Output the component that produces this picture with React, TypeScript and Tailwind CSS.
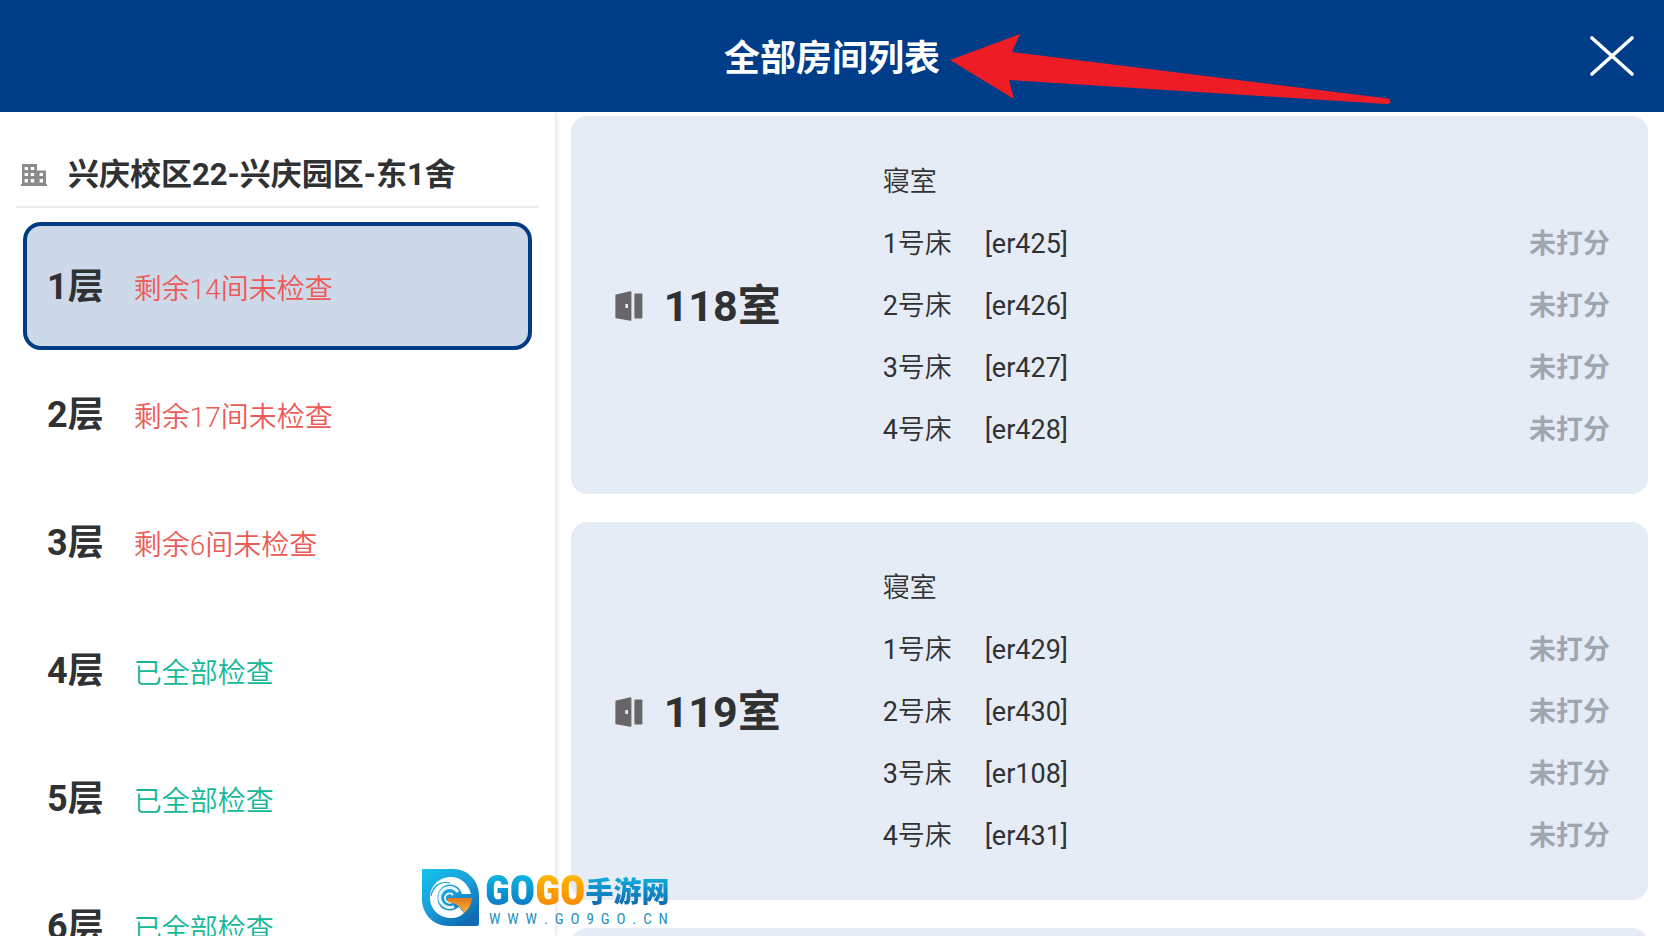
type Floor = { name: string; status: string; done: boolean };
type Bed = { name: string; code: string; score: string };
type Room = { name: string; kind: string; beds: Bed[] };

const floors: Floor[] = [
  { name: "1层", status: "剩余14间未检查", done: false },
  { name: "2层", status: "剩余17间未检查", done: false },
  { name: "3层", status: "剩余6间未检查", done: false },
  { name: "4层", status: "已全部检查", done: true },
  { name: "5层", status: "已全部检查", done: true },
  { name: "6层", status: "已全部检查", done: true },
];

const rooms: Room[] = [
  {
    name: "118室",
    kind: "寝室",
    beds: [
      { name: "1号床", code: "[er425]", score: "未打分" },
      { name: "2号床", code: "[er426]", score: "未打分" },
      { name: "3号床", code: "[er427]", score: "未打分" },
      { name: "4号床", code: "[er428]", score: "未打分" },
    ],
  },
  {
    name: "119室",
    kind: "寝室",
    beds: [
      { name: "1号床", code: "[er429]", score: "未打分" },
      { name: "2号床", code: "[er430]", score: "未打分" },
      { name: "3号床", code: "[er108]", score: "未打分" },
      { name: "4号床", code: "[er431]", score: "未打分" },
    ],
  },
];

function BuildingIcon() {
  return (
    <svg viewBox="0 0 26 22" className="h-[22px] w-[26px] shrink-0" aria-hidden="true">
      <path
        fill="#8b8b8b"
        fillRule="evenodd"
        d="M1 0H16V6.5H25V20H26V22H0V20H1ZM3.6 3v3h3.4V3ZM9.8 3v3h3.4V3ZM3.6 9v3h3.4V9ZM9.8 9v3h3.4V9ZM3.6 15v3.4h3.4V15ZM9.8 15v3.4h3.4V15ZM18.6 9v3h3.4V9ZM18.6 15v3.4h3.4V15Z"
      />
    </svg>
  );
}

function DoorIcon() {
  return (
    <svg viewBox="0 0 28 30" className="h-[30px] w-[28px] shrink-0" aria-hidden="true">
      <path
        fill="#666666"
        fillRule="evenodd"
        d="M1.2 3.6 15.2 0.2Q16.4 0 16.4 1V29Q16.4 30 15.2 29.8L1.2 27.2Q0.4 27 0.4 26.2V4.6Q0.4 3.8 1.2 3.6ZM10.4 13v4h2.6v-4Z"
      />
      <rect x="19.4" y="2.6" width="8" height="24.8" rx="1" fill="#666666" />
    </svg>
  );
}

function Arrow() {
  return (
    <svg
      viewBox="0 0 442 72"
      className="pointer-events-none absolute top-8 left-1/2 ml-[118px] h-[72px] w-[442px]"
      aria-hidden="true"
    >
      <path
        fill="#ee1c25"
        d="M0 28 70 2 62 20 438 66.6Q441 67.4 440.4 70 439.6 72.4 436 72L59 48 64 67Z"
      />
    </svg>
  );
}

function SiteMark() {
  return (
    <div className="pointer-events-none absolute bottom-[10px] left-[422px] flex items-center gap-[6px]">
      <svg viewBox="0 0 57 57" className="size-[57px]" aria-hidden="true">
        <defs>
          <linearGradient id="mark-body" x1="0" y1="0" x2="0.7" y2="1">
            <stop offset="0" stopColor="#14c4ea" />
            <stop offset="0.55" stopColor="#1b9cd8" />
            <stop offset="1" stopColor="#0f6bb3" />
          </linearGradient>
          <linearGradient id="mark-wedge" x1="0" y1="0" x2="0" y2="1">
            <stop offset="0" stopColor="#e07a1a" />
            <stop offset="1" stopColor="#fbb03b" />
          </linearGradient>
        </defs>
        <path
          fill="url(#mark-body)"
          d="M1 0H31C46 0 57 12 57 27V55Q57 57 55 57H27C12 57 0 46 0 30V1Q0 0 1 0Z"
        />
        <path
          fill="#fff"
          d="M49 25C46 14 38 8 29 8 17 8 8 17 8 28.500S17 49 29 49C35 49 39 47 42 44L37 38C34 40 31 41.500 28 41.500 20 41.500 15.500 36 15.500 29S20 15.500 28 15.500C34 15.500 38 19 40 25Z"
        />
        <path d="M9 27C11 16 19 12 28 14" fill="none" stroke="#1b9cd8" strokeWidth="1.2" />
        <path d="M36 23A10 10 0 1 0 32 37.500" fill="none" stroke="#e8f7fd" strokeWidth="3" />
        <path d="M31 26A4.600 4.600 0 1 0 30 33" fill="none" stroke="#e8f7fd" strokeWidth="2" />
        <path fill="url(#mark-wedge)" d="M26 29H50C49.500 36 46 41 42 44 39 37 33 34 26 33Z" />
      </svg>
      <div className="flex flex-col">
        <div className="flex h-[43px] items-center font-bold">
          <span className="bg-gradient-to-b from-[#12c0e6] to-[#0d6fc0] bg-clip-text font-['Roboto_Condensed','Roboto',sans-serif] text-[42px] leading-[43px] font-black text-transparent">
            GO
          </span>
          <span className="bg-gradient-to-b from-[#ffc000] to-[#f77f00] bg-clip-text font-['Roboto_Condensed','Roboto',sans-serif] text-[42px] leading-[43px] font-black text-transparent">
            GO
          </span>
          <span className="bg-gradient-to-b from-[#12c0e6] to-[#1259a8] bg-clip-text font-['Noto_Sans_CJK_SC',sans-serif] text-[28px] leading-[43px] font-black text-transparent">
            手游网
          </span>
        </div>
        <p className="pl-1 font-['Roboto_Condensed','Roboto',sans-serif] text-[15px] leading-[14px] whitespace-pre text-[#2590bd]">
          {"W  W  W  .  G  O  9  G  O  .  C  N"}
        </p>
      </div>
    </div>
  );
}

function FloorButton({ floor, active }: { floor: Floor; active: boolean }) {
  return (
    <button
      type="button"
      aria-pressed={active}
      className={`flex h-32 w-full shrink-0 items-center rounded-[18px] border-4 pt-1 pl-5 text-left ${
        active ? "border-[#003c84] bg-[#cdd8e8]" : "border-transparent"
      }`}
    >
      <span className="flex items-baseline gap-[30px]">
        <span className="text-[36px] leading-10 font-bold text-[#303133]">{floor.name}</span>
        <span
          className={`font-['Roboto','Noto_Sans_CJK_SC_DemiLight','Noto_Sans_CJK_SC',sans-serif] text-[28px] leading-10 font-light ${
            floor.done ? "text-[#14b896]" : "text-[#ee5a57]"
          }`}
        >
          {floor.status}
        </span>
      </span>
    </button>
  );
}

function RoomCard({ room }: { room: Room }) {
  return (
    <section className="flex shrink-0 items-center rounded-2xl bg-[#e6ecf5] pt-[35px] pr-[38px] pb-[33px] pl-11">
      <div className="flex w-[268px] shrink-0 items-center gap-[21px]">
        <DoorIcon />
        <h2 className="text-[43px] leading-[62px] font-bold text-[#303133]">{room.name}</h2>
      </div>
      <div className="flex-1 font-['Roboto','Noto_Sans_CJK_SC_DemiLight','Noto_Sans_CJK_SC',sans-serif] text-[27px] leading-[62px] text-[#303133]">
        <p>{room.kind}</p>
        <ul>
          {room.beds.map((bed) => (
            <li key={bed.name} className="flex">
              <span className="w-[102px]">{bed.name}</span>
              <span className="flex-1">{bed.code}</span>
              <span className="font-['Roboto','Noto_Sans_CJK_SC',sans-serif] font-bold text-[#9fa6af]">
                {bed.score}
              </span>
            </li>
          ))}
        </ul>
      </div>
    </section>
  );
}

export default function App() {
  return (
    <div className="relative flex h-screen flex-col overflow-hidden bg-white font-['Roboto','Noto_Sans_CJK_SC',sans-serif]">
      <header className="relative flex h-28 shrink-0 items-center bg-[#003d89] px-[30px]">
        <span className="w-11 shrink-0" />
        <h1 className="flex-1 pt-1.5 text-center text-[36px] leading-[52px] font-bold text-white">
          全部房间列表
        </h1>
        <button type="button" aria-label="关闭" className="shrink-0 text-white">
          <svg viewBox="0 0 44 40" className="h-10 w-11" aria-hidden="true">
            <path
              d="M2 2 42 38M42 2 2 38"
              fill="none"
              stroke="currentColor"
              strokeWidth="3.6"
              strokeLinecap="round"
            />
          </svg>
        </button>
        <Arrow />
      </header>

      <main className="flex min-h-0 flex-1">
        <nav
          aria-label="楼层"
          className="flex w-1/3 shrink-0 flex-col overflow-hidden px-4 shadow-[1px_0_5px_rgba(0,0,0,0.14)]"
        >
          <div className="flex h-24 shrink-0 items-center gap-[21px] border-b-2 border-[#ededed] pt-8 pl-[5px]">
            <BuildingIcon />
            <p className="text-[31px] leading-[46px] font-bold whitespace-nowrap text-[#303133]">
              兴庆校区22-兴庆园区-东1舍
            </p>
          </div>
          <div className="mt-[14px] flex flex-col px-[7px]">
            {floors.map((floor, index) => (
              <FloorButton key={floor.name} floor={floor} active={index === 0} />
            ))}
          </div>
        </nav>

        <div className="flex min-w-0 flex-1 flex-col gap-7 overflow-hidden px-4 pt-1">
          {rooms.map((room) => (
            <RoomCard key={room.name} room={room} />
          ))}
          <div className="h-24 shrink-0 rounded-2xl bg-[#e6ecf5]" />
        </div>
      </main>

      <SiteMark />
    </div>
  );
}
